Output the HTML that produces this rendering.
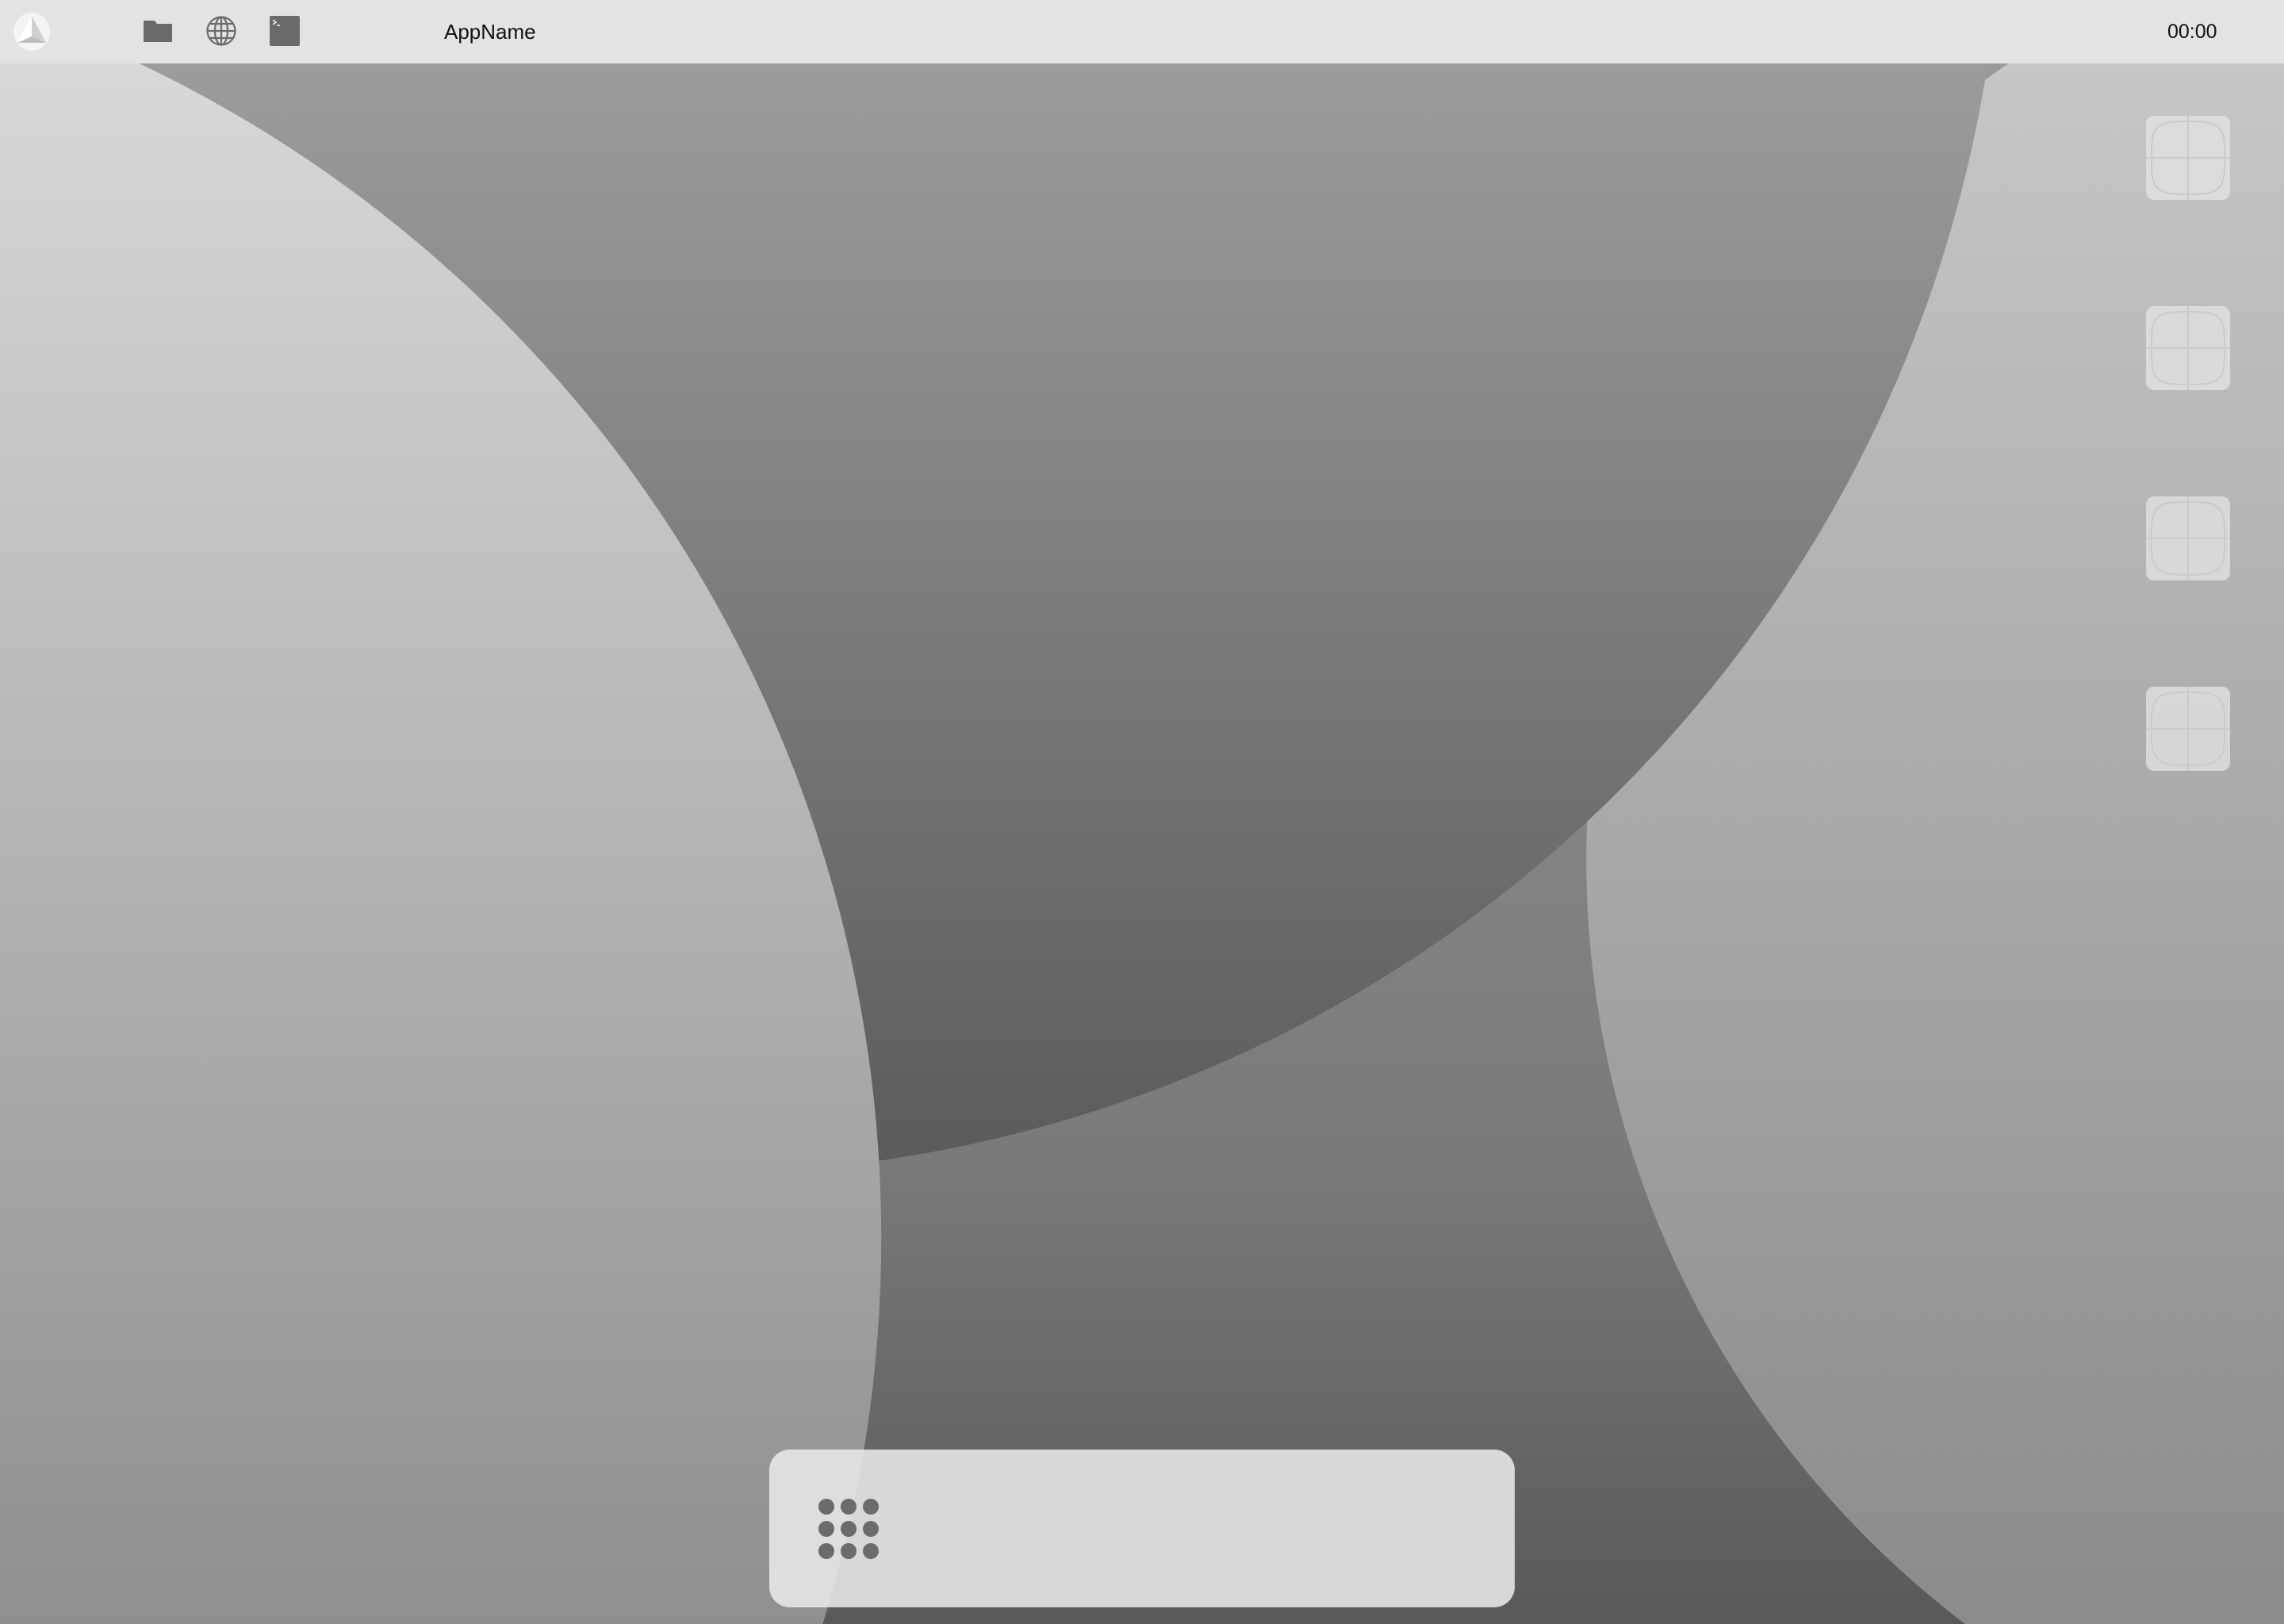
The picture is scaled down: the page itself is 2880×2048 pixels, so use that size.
<!DOCTYPE html>
<html><head><meta charset="utf-8"><style>
html,body{margin:0;padding:0;width:2880px;height:2048px;overflow:hidden;font-family:"Liberation Sans",sans-serif;position:relative}
#bg{position:absolute;left:0;top:0;display:block}
.bar{position:absolute;left:0;top:0;width:2880px;height:80px;background:#e3e3e3}
.t{position:absolute;font-size:26px;color:#111;line-height:30px}
.tile{position:absolute;left:2706px;width:106px;height:106px;border-radius:10px;background:rgba(228,228,228,0.75)}
.dock{position:absolute;left:970px;top:1828px;width:940px;height:199px;border-radius:26px;background:rgba(232,232,232,0.88)}
.dot{position:absolute;width:20px;height:20px;border-radius:50%;background:#6b6b6b}
</style></head><body>
<svg id="bg" width="2880" height="2048" viewBox="0 0 1568 1115" preserveAspectRatio="none">
<defs>
<linearGradient id="b" gradientUnits="userSpaceOnUse" x1="0" y1="43" x2="0" y2="1115"><stop offset="0" stop-color="#9a9a9a"/><stop offset="0.7" stop-color="#7a7a7a"/><stop offset="1" stop-color="#595959"/></linearGradient>
<linearGradient id="d" gradientUnits="userSpaceOnUse" x1="0" y1="43" x2="0" y2="800"><stop offset="0" stop-color="#9c9c9c"/><stop offset="1" stop-color="#5b5b5b"/></linearGradient>
<linearGradient id="l" gradientUnits="userSpaceOnUse" x1="0" y1="43" x2="0" y2="1115"><stop offset="0" stop-color="#d8d8d8"/><stop offset="1" stop-color="#8f8f8f"/></linearGradient>
<linearGradient id="r" gradientUnits="userSpaceOnUse" x1="0" y1="43" x2="0" y2="1115"><stop offset="0" stop-color="#c6c6c6"/><stop offset="1" stop-color="#8b8b8b"/></linearGradient>
</defs>
<rect width="1568" height="1115" fill="url(#b)"/>
<circle cx="1749" cy="590" r="660" fill="url(#r)"/>
<circle cx="476" cy="-93" r="899" fill="url(#d)"/>
<circle cx="-288" cy="850" r="893" fill="url(#l)"/>
</svg>
<div class="bar"></div>
<svg style="position:absolute;left:16px;top:16px" width="48" height="48" viewBox="0 0 48 48">
<ellipse cx="24" cy="24" rx="23" ry="24" fill="#f4f4f4"/>
<path d="M24 4 L42 38 L24 30 Z" fill="#d0d0d0"/><path d="M24 4 L6 38 L24 30Z" fill="#fff"/><path d="M6 38 L42 38 L24 30Z" fill="#bdbdbd"/>
</svg>
<svg style="position:absolute;left:180px;top:26px" width="38" height="28" viewBox="0 0 38 28"><path d="M1 0 H15 L18 4 H37 V27 H1 Z" fill="#6a6a6a"/></svg>
<svg style="position:absolute;left:260px;top:20px" width="38" height="38" viewBox="0 0 38 38" fill="none" stroke="#6a6a6a" stroke-width="2.2">
<ellipse cx="19" cy="19" rx="17.5" ry="17.5"/><ellipse cx="19" cy="19" rx="8" ry="17.5"/><line x1="19" y1="1.5" x2="19" y2="36.5"/><line x1="1.5" y1="19" x2="36.5" y2="19"/><line x1="4" y1="10" x2="34" y2="10"/><line x1="4" y1="28" x2="34" y2="28"/></svg>
<svg style="position:absolute;left:340px;top:20px" width="38" height="38" viewBox="0 0 38 38"><rect width="38" height="38" rx="2" fill="#6a6a6a"/><path d="M4 5 L8 8 L4 11" stroke="#eee" stroke-width="1.6" fill="none"/><line x1="9" y1="12" x2="13" y2="12" stroke="#eee" stroke-width="1.6"/></svg>
<div class="t" style="left:560px;top:25px">AppName</div>
<div class="t" style="left:2733px;top:25px;font-size:25px">00:00</div>
<div class="tile" style="top:146px"></div>
<div class="tile" style="top:386px"></div>
<div class="tile" style="top:626px"></div>
<div class="tile" style="top:866px"></div>
<svg style="position:absolute;left:2706px;top:146px" width="106" height="826" viewBox="0 0 106 826" fill="none" stroke="#cacaca" stroke-width="2">
<g id="g"><path d="M53 7 C22 7 7 9 7 40 V66 C7 97 22 99 53 99 C84 99 99 97 99 66 V40 C99 9 84 7 53 7Z"/><line x1="53" y1="0" x2="53" y2="106"/><line x1="0" y1="53" x2="106" y2="53"/></g>
<use href="#g" y="240"/><use href="#g" y="480"/><use href="#g" y="720"/>
</svg>
<div class="dock"></div>
<div class="dot" style="left:1032px;top:1890px"></div><div class="dot" style="left:1060px;top:1890px"></div><div class="dot" style="left:1088px;top:1890px"></div>
<div class="dot" style="left:1032px;top:1918px"></div><div class="dot" style="left:1060px;top:1918px"></div><div class="dot" style="left:1088px;top:1918px"></div>
<div class="dot" style="left:1032px;top:1946px"></div><div class="dot" style="left:1060px;top:1946px"></div><div class="dot" style="left:1088px;top:1946px"></div>
</body></html>
